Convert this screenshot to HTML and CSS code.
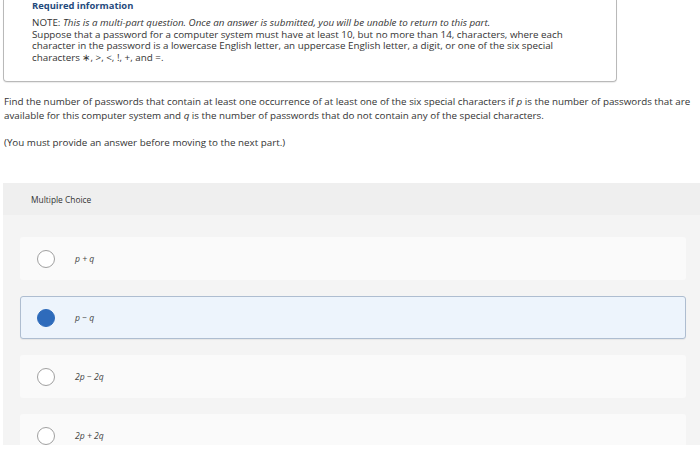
FILE: index.html
```html
<!DOCTYPE html>
<html>
<head>
<meta charset="utf-8">
<link rel="stylesheet" href="styles.css">
</head>
<body>
<div class="page">
  <div class="info-box">
    <div class="info-title">Required information</div>
    <div class="info-text">
      <p>NOTE: <em>This is a multi-part question. Once an answer is submitted, you will be unable to return to this part.</em></p>
      <p>Suppose that a password for a computer system must have at least 10, but no more than 14, characters, where each character in the password is a lowercase English letter, an uppercase English letter, a digit, or one of the six special characters ∗, &gt;, &lt;, !, +, and =.</p>
    </div>
  </div>
  <div class="question">
    <p>Find the number of passwords that contain at least one occurrence of at least one of the six special characters if <em>p</em> is the number of passwords that are available for this computer system and <em>q</em> is the number of passwords that do not contain any of the special characters.</p>
    <p class="note">(You must provide an answer before moving to the next part.)</p>
  </div>
  <div class="mc">
    <div class="mc-header">Multiple Choice</div>
    <div class="mc-body">
      <div class="option"><span class="radio"></span><span class="label"><i>p</i> + <i>q</i></span></div>
      <div class="option selected"><span class="radio"></span><span class="label"><i>p</i> − <i>q</i></span></div>
      <div class="option"><span class="radio"></span><span class="label">2<i>p</i> − 2<i>q</i></span></div>
      <div class="option"><span class="radio"></span><span class="label">2<i>p</i> + 2<i>q</i></span></div>
    </div>
  </div>
</div>
</body>
</html>
```
FILE: styles.css
```css
html, body {
  margin: 0;
  padding: 0;
  background: #ffffff;
}
body {
  font-family: "Open Sans", Lato, "Liberation Sans", sans-serif;
  color: #333333;
  font-size: 9.8px;
}
p { margin: 0; }
.page {
  width: 700px;
  height: 455px;
  overflow: hidden;
}
.info-box {
  margin-left: 3px;
  width: 614px;
  height: 82px;
  box-sizing: border-box;
  border: 1px solid #b9b9b9;
  border-top: 0;
  border-radius: 0 0 4px 4px;
  box-shadow: 0 1px 1px rgba(0,0,0,0.08);
  padding: 0 38px 0 28px;
}
.info-title {
  font-weight: 700;
  color: #1f4a7c;
  font-size: 9.4px;
  line-height: 11px;
}
.info-text {
  margin-top: 6px;
  line-height: 11.6px;
}
.question {
  padding: 13px 3px 0 4px;
  line-height: 14px;
  font-size: 9.8px;
}
.question .note {
  margin-top: 13px;
}
.mc {
  margin-top: 33px;
  margin-left: 3px;
  height: 262px;
  background: #f4f4f4;
  overflow: hidden;
}
.mc-header {
  height: 32px;
  box-sizing: border-box;
  background: #efefef;
  padding-left: 28px;
  display: flex;
  align-items: center;
  font-size: 8.4px;
  color: #333;
}
.mc-body {
  padding: 22px 14px 0 17px;
  display: flex;
  flex-direction: column;
  gap: 16px;
}
.option {
  height: 43px;
  box-sizing: border-box;
  background: #fafafa;
  border: 1px solid transparent;
  border-radius: 3px;
  display: flex;
  align-items: center;
  padding-left: 16px;
}
.option.selected {
  background: #edf4fc;
  border-color: #aebdd0;
  box-shadow: 0 1px 1px rgba(0,0,0,0.06);
}
.radio {
  width: 18px;
  height: 18px;
  box-sizing: border-box;
  border: 1.5px solid #a0a0a0;
  border-radius: 50%;
  background: #ffffff;
  flex: none;
}
.selected .radio {
  background: #2e6bbb;
  border-color: #2e6bbb;
}
.label {
  margin-left: 20px;
  font-size: 8.6px;
  font-style: italic;
  color: #444;
}
.label i { font-style: italic; }
```
